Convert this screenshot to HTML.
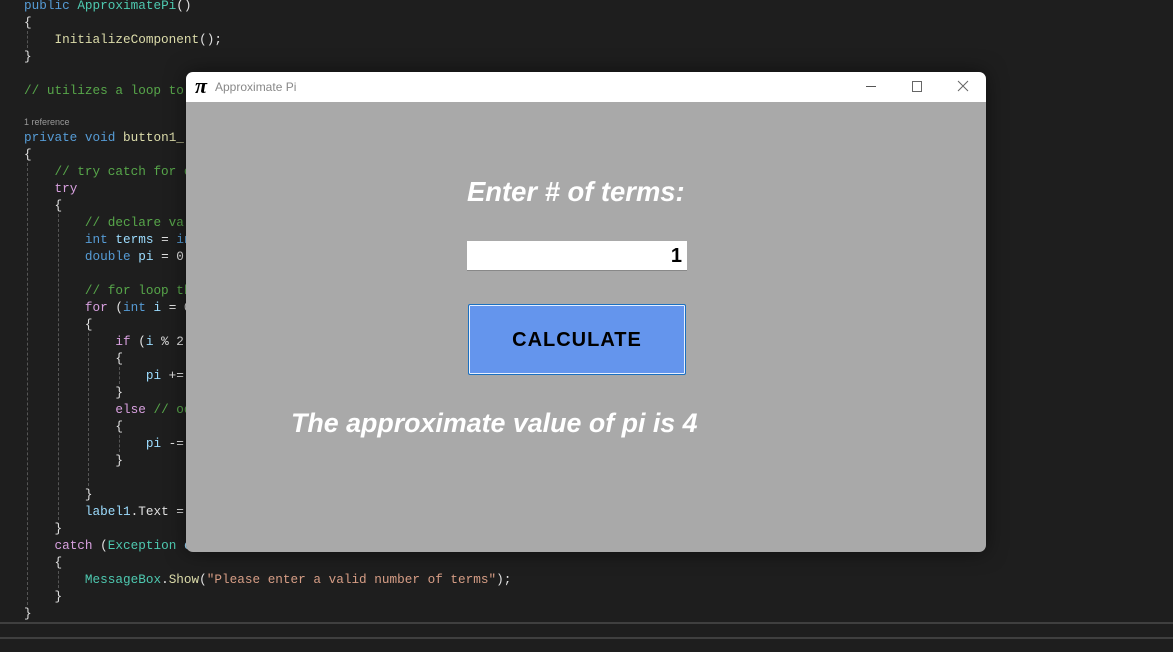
<!DOCTYPE html>
<html><head><meta charset="utf-8"><style>
body{margin:0;width:1173px;height:652px;background:#1e1e1e;overflow:hidden;position:relative;font-family:"Liberation Sans",sans-serif}
.code{position:absolute;left:0;top:1px;font-family:"Liberation Mono",monospace;font-size:12.7px;color:#e0e0e0;white-space:pre}
.l{position:absolute;left:24px;height:17px;line-height:17px}
.k{color:#569cd6}.c{color:#57a64a}.p{color:#d8a0df}.m{color:#dcdcaa}.t{color:#4ec9b0}.s{color:#d69d85}.v{color:#9cdcfe}
.ref{position:absolute;left:24px;top:117px;font-family:"Liberation Sans",sans-serif;font-size:9px;color:#999}
.g{position:absolute;width:0;border-left:1px dashed #555}
.hl{position:absolute;left:0;width:1173px;height:2px;background:#3f3f3f}
.win{position:absolute;left:186px;top:72px;width:800px;height:480px;border-radius:7px;overflow:hidden;box-shadow:0 0 20px rgba(0,0,0,.5)}
.tb{height:30px;background:#fff;position:relative}
.ct{height:450px;background:#a9a9a9;position:relative}
</style></head><body>
<div class="code">
<div class="l" style="top:-4px"><span class="k">public</span> <span class="t">ApproximatePi</span>()</div>
<div class="l" style="top:13px">{</div>
<div class="l" style="top:30px">    <span class="m">InitializeComponent</span>();</div>
<div class="l" style="top:47px">}</div>
<div class="l" style="top:81px"><span class="c">// utilizes a loop to</span></div>
<div class="l" style="top:128px"><span class="k">private</span> <span class="k">void</span> <span class="m">button1_(</span></div>
<div class="l" style="top:145px">{</div>
<div class="l" style="top:162px">    <span class="c">// try catch for e</span></div>
<div class="l" style="top:179px">    <span class="p">try</span></div>
<div class="l" style="top:196px">    {</div>
<div class="l" style="top:213px">        <span class="c">// declare va</span></div>
<div class="l" style="top:230px">        <span class="k">int</span> <span class="v">terms</span> = <span class="k">in</span></div>
<div class="l" style="top:247px">        <span class="k">double</span> <span class="v">pi</span> = 0</div>
<div class="l" style="top:281px">        <span class="c">// for loop th</span></div>
<div class="l" style="top:298px">        <span class="p">for</span> (<span class="k">int</span> <span class="v">i</span> = 0</div>
<div class="l" style="top:315px">        {</div>
<div class="l" style="top:332px">            <span class="p">if</span> (<span class="v">i</span> % 2</div>
<div class="l" style="top:349px">            {</div>
<div class="l" style="top:366px">                <span class="v">pi</span> +=</div>
<div class="l" style="top:383px">            }</div>
<div class="l" style="top:400px">            <span class="p">else</span> <span class="c">// od</span></div>
<div class="l" style="top:417px">            {</div>
<div class="l" style="top:434px">                <span class="v">pi</span> -=</div>
<div class="l" style="top:451px">            }</div>
<div class="l" style="top:485px">        }</div>
<div class="l" style="top:502px">        <span class="v">label1</span>.Text =</div>
<div class="l" style="top:519px">    }</div>
<div class="l" style="top:536px">    <span class="p">catch</span> (<span class="t">Exception</span> <span class="v">e</span></div>
<div class="l" style="top:553px">    {</div>
<div class="l" style="top:570px">        <span class="t">MessageBox</span>.<span class="m">Show</span>(<span class="s">"Please enter a valid number of terms"</span>);</div>
<div class="l" style="top:587px">    }</div>
<div class="l" style="top:604px">}</div>
</div>
<div class="ref">1 reference</div>
<div class="g" style="left:27px;top:31px;height:17px"></div>
<div class="g" style="left:27px;top:163px;height:442px"></div>
<div class="g" style="left:58px;top:214px;height:306px"></div>
<div class="g" style="left:88px;top:333px;height:153px"></div>
<div class="g" style="left:119px;top:367px;height:17px"></div>
<div class="g" style="left:119px;top:435px;height:17px"></div>
<div class="g" style="left:58px;top:571px;height:17px"></div>
<div class="hl" style="top:622px"></div>
<div class="hl" style="top:637px"></div>
<div class="win">
<div class="tb">
<span style="position:absolute;left:9px;top:1px;font-family:'Liberation Serif',serif;font-weight:bold;font-style:italic;font-size:22px;color:#000">π</span>
<span style="position:absolute;left:29px;top:8px;font-size:12px;color:#888">Approximate Pi</span>
<div style="position:absolute;left:680px;top:14px;width:10px;height:1px;background:#555"></div>
<div style="position:absolute;left:726px;top:9px;width:8px;height:9px;border:1px solid #666"></div>
<svg style="position:absolute;left:771px;top:8px" width="12" height="12"><path d="M1 1L11 11M11 1L1 11" stroke="#666" stroke-width="1"/></svg>
</div>
<div class="ct">
<div style="position:absolute;left:281px;top:74px;font-size:27.4px;font-weight:bold;font-style:italic;color:#fff">Enter # of terms:</div>
<div style="position:absolute;left:281px;top:139px;width:220px;height:30px;background:#fff;border-bottom:1px solid #888;box-sizing:border-box;text-align:right;font-size:20px;font-weight:bold;line-height:30px;padding-right:5px">1</div>
<div style="position:absolute;left:282px;top:202px;width:218px;height:71px;background:#6495ed;border:1px solid #1b70c0;box-shadow:inset 0 0 0 1px #e8f0ff;border-radius:2px;box-sizing:border-box;text-align:center;line-height:71px;font-size:20px;font-weight:bold;letter-spacing:1px">CALCULATE</div>
<div style="position:absolute;left:105px;top:306px;font-size:26.8px;font-weight:bold;font-style:italic;color:#fff">The approximate value of pi is 4</div>
</div>
</div>
</body></html>
